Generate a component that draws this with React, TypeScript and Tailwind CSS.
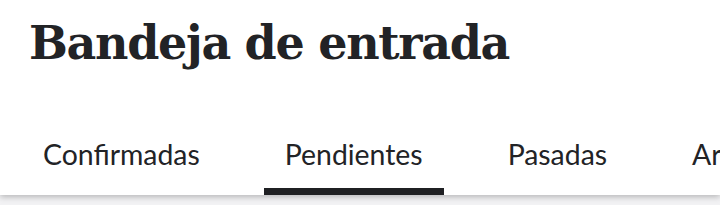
export default function App() {
  const tabs = ["Confirmadas", "Pendientes", "Pasadas", "Archivadas"];
  return (
    <div className="w-[720px] h-[205px] overflow-hidden bg-[#f2f2f4]">
      <div className="bg-white shadow-[0_2px_6px_rgba(0,0,0,0.25)] relative">
        <h1
          className="pl-[29px] pt-[13px] h-[118px] text-[46px] leading-[60px] font-bold text-[#222326] tracking-[-1.3px]"
          style={{ fontFamily: '"DejaVu Serif", serif' }}
        >
          Bandeja de entrada
        </h1>
        <div
          className="flex gap-[43px] pl-[22px] whitespace-nowrap"
          style={{ fontFamily: 'Lato, sans-serif' }}
        >
          {tabs.map((t, i) => (
            <div
              key={t}
              className={`px-[21px] h-[77px] shrink-0 flex items-start pt-[16px] text-[28.4px] leading-[40px] text-[#222326] border-b-[7px] ${
                i === 1 ? "border-[#1f2023]" : "border-transparent"
              }`}
            >
              {t}
            </div>
          ))}
        </div>
      </div>
    </div>
  );
}
